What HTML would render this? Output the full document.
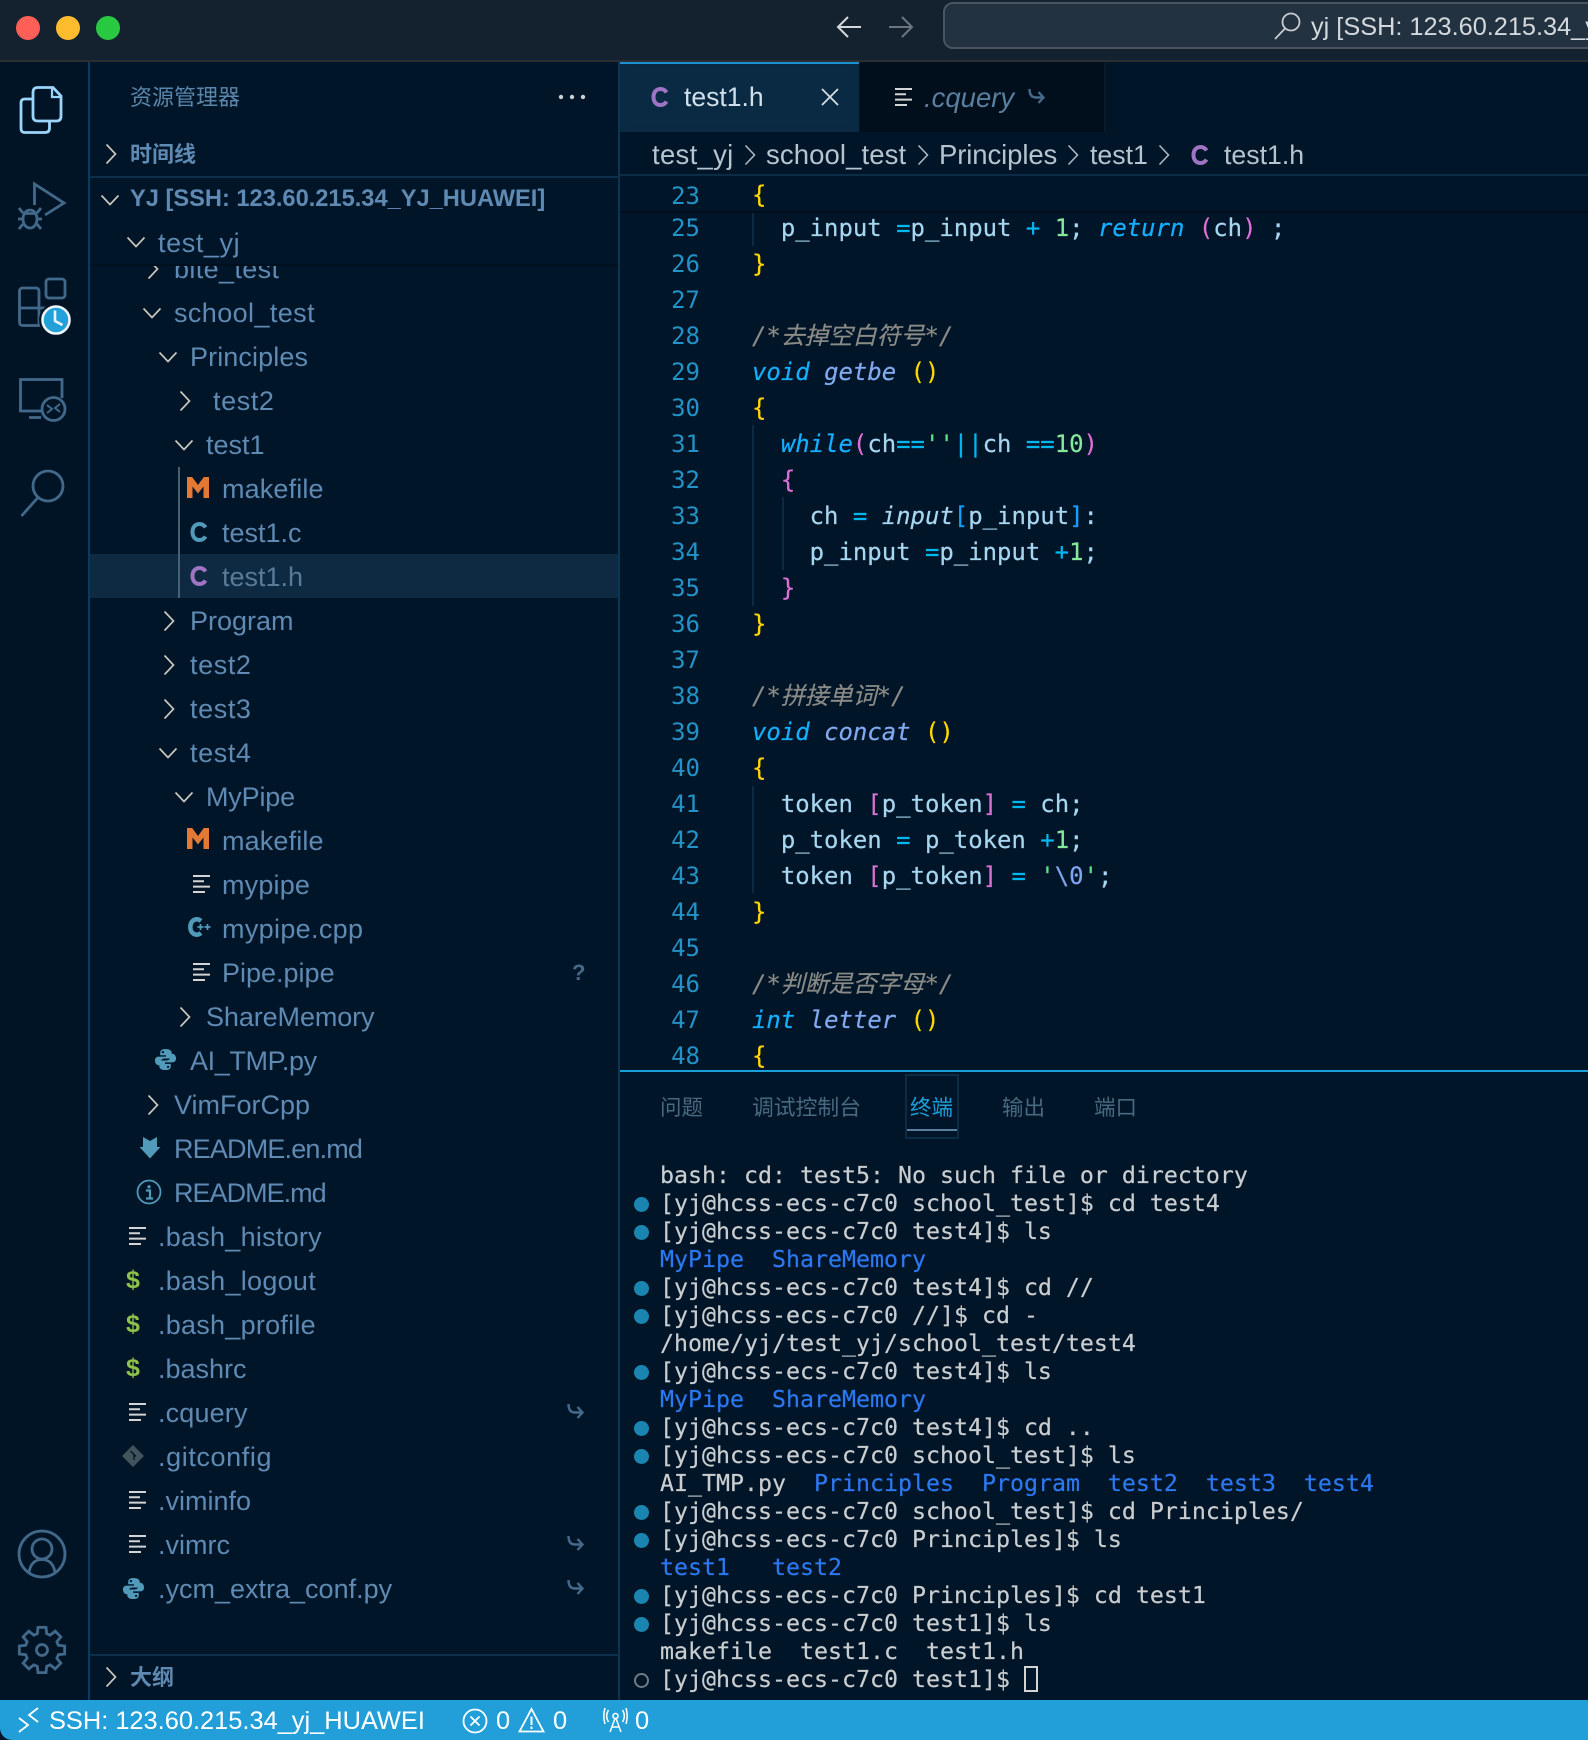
<!DOCTYPE html>
<html lang="zh">
<head>
<meta charset="utf-8">
<title>test1.h</title>
<style>
html,body{margin:0;padding:0;width:1588px;height:1740px;overflow:hidden;background:#001527}
body{position:relative;font-family:"Liberation Sans","Noto Sans CJK SC",sans-serif}
div,svg{position:absolute}
svg{overflow:visible}
#clip{left:0;top:0;width:1588px;height:1740px;overflow:hidden}
.r{height:44px;line-height:44px;font-size:27px;color:#5f8ab3;white-space:pre}
.cr{width:12px;height:22px}
.cd{width:20px;height:12px}
.fl{width:17px;height:18px}
.hk{width:18px;height:18px}
.dl{left:130px;width:24px;height:44px;line-height:44px;font-size:25px;font-weight:bold;color:#8dc149;text-align:center}
.ln{left:650px;width:50px;height:36px;margin-top:1px;text-align:right;font:24px/36px "DejaVu Sans Mono",monospace;color:#2393c7}
.c{left:752px;height:36px;margin-top:1px;white-space:pre;font:23.95px/36px "DejaVu Sans Mono","Noto Sans CJK SC",monospace;color:#a7d6f0;-webkit-text-stroke:.2px}
.y{color:#ffd700}.p{color:#da70d6}.b{color:#179fff}.o{color:#00b8f0}.n{color:#85e89d}
.k{color:#14b0ff;font-style:italic}.f{color:#82aaf0;font-style:italic}.g{color:#8a8a86;font-style:italic}
.q{color:#5fe08a}.e{color:#7fa5f0}.w{color:#a7d6f0}
.t{left:660px;height:28px;margin-top:1px;white-space:pre;font:23.26px/28px "DejaVu Sans Mono",monospace;color:#c9cdd0;-webkit-text-stroke:.2px}
.d{color:#2c78f0}
.dot{left:634px;width:15px;height:15px;margin-top:1px;border-radius:50%;background:#1a85b0}
.pt{height:40px;line-height:40px;margin-top:1px;font-size:21.5px;color:#48697f;white-space:pre}
.bc{top:135px;height:40px;line-height:40px;font-size:27.5px;color:#b5c4cf;white-space:pre}
.gd{width:2px;background:#0c2a42}
.st{top:1700px;height:40px;line-height:43px;font-size:25.4px;color:#fff;white-space:pre}
.ai{fill:none;stroke:#42698a;stroke-width:2.8}
</style>
</head>
<body>
<div id="clip">
<svg width="0" height="0" style="left:0;top:0">
<defs>
<symbol id="chr" viewBox="0 0 12 22"><path fill="none" stroke="#c9c7bd" stroke-width="1.7" d="M1.5 1.5L10.5 11L1.5 20.5"/></symbol>
<symbol id="chd" viewBox="0 0 20 12"><path fill="none" stroke="#c9c7bd" stroke-width="1.7" d="M1.5 1.5L10 10.5L18.5 1.5"/></symbol>
<symbol id="file" viewBox="0 0 17 18"><path fill="none" stroke="#d2d4d6" stroke-width="2" d="M0 1h17M0 6.3h11M0 11.6h17M0 17h12"/></symbol>
<symbol id="hook" viewBox="0 0 18 18"><path fill="none" stroke="#47698a" stroke-width="2.4" d="M2.5 1C2.5 6.5 4.5 9.5 9 9.5H16.5M11.5 4L16.5 9.5L11.5 15"/></symbol>
<symbol id="M" viewBox="0 0 22 21"><path fill="#e37933" d="M0 21V0h5.2L11 8l5.8-8H22v21h-5.5V9.500L11 16.500 5.500 9.500V21z"/></symbol>
<symbol id="cb" viewBox="0 0 17 20"><path fill="none" stroke="#519aba" stroke-width="4" d="M15.500 5.500C14 3 12 2 9.500 2C5 2 2.500 5.500 2.500 10C2.500 14.500 5 18 9.500 18C12 18 14 17 15.500 14.500"/></symbol>
<symbol id="cp" viewBox="0 0 17 20"><path fill="none" stroke="#a074c4" stroke-width="4" d="M15.500 5.500C14 3 12 2 9.500 2C5 2 2.500 5.500 2.500 10C2.500 14.500 5 18 9.500 18C12 18 14 17 15.500 14.500"/></symbol>
<symbol id="py" viewBox="0 0 24 24"><path fill="#519aba" d="M12 1C8 1 6.500 2.500 6.500 5v2.500H12.500V9H5C2.500 9 1 10.500 1 13s1.500 5 4 5h2v-3c0-2.500 1.500-4 4-4h5c1.500 0 2.500-1 2.500-2.500V5C18.500 2.500 16 1 12 1z"/><path fill="#519aba" d="M12 23c4 0 5.500-1.500 5.500-4v-2.500H11.500V15H19c2.500 0 4-1.500 4-4s-1.500-5-4-5h-2v3c0 2.500-1.500 4-4 4H8c-1.500 0-2.500 1-2.500 2.500V19C5.500 21.500 8 23 12 23z"/><circle cx="9.300" cy="4.300" r="1.200" fill="#001527"/><circle cx="14.700" cy="19.700" r="1.200" fill="#001527"/></symbol>
</defs>
</svg>

<!-- Title bar -->
<div style="left:0;top:0;width:1588px;height:60px;background:#14222f"></div>
<div style="left:0;top:60px;width:1588px;height:2px;background:#2b2e31"></div>
<div style="left:16px;top:16px;width:24px;height:24px;border-radius:50%;background:#ff5f57"></div>
<div style="left:56px;top:16px;width:24px;height:24px;border-radius:50%;background:#febc2e"></div>
<div style="left:96px;top:16px;width:24px;height:24px;border-radius:50%;background:#28c840"></div>
<svg style="left:836px;top:15px" width="26" height="24" viewBox="0 0 26 24"><path d="M12 2L2 12L12 22M2 12H25" fill="none" stroke="#d4d8dc" stroke-width="2"/></svg>
<svg style="left:888px;top:15px" width="26" height="24" viewBox="0 0 26 24"><path d="M14 2L24 12L14 22M24 12H1" fill="none" stroke="#6c7680" stroke-width="2"/></svg>
<div id="sb" style="left:943px;top:2px;width:645px;height:47px;overflow:hidden"><div style="left:0;top:0;width:700px;height:47px;box-sizing:border-box;border:2px solid #49545f;border-radius:10px;background:#233240"></div>
<svg style="left:330px;top:10px" width="28" height="28" viewBox="0 0 28 28"><circle cx="18" cy="10" r="8.500" fill="none" stroke="#c6ccd2" stroke-width="1.800"/><path d="M12 16.500L2 27" stroke="#c6ccd2" stroke-width="1.800"/></svg>
<div style="left:368px;top:5px;width:277px;height:40px;overflow:hidden;line-height:40px;font-size:25.300px;color:#d3d8dd;white-space:pre">yj [SSH: 123.60.215.34_yj_HUAWEI]</div></div>

<!-- Activity bar -->
<div style="left:0;top:62px;width:88px;height:1638px;background:#001426"></div>
<div style="left:88px;top:62px;width:2px;height:1638px;background:#0c3a5c"></div>
<div style="left:618px;top:62px;width:2px;height:1638px;background:#0c3553"></div>

<svg style="left:0;top:60px" width="88" height="480" viewBox="0 60 88 480">
<!-- files -->
<path d="M38 87.500H53L61 96V116C61 119.500 59.500 121 56.500 121H38C34.500 121 33 119.500 33 116V92.500C33 89 34.500 87.500 38 87.500z" fill="none" stroke="#9cd5fb" stroke-width="2.800"/>
<path d="M52 88V97H61" fill="none" stroke="#9cd5fb" stroke-width="2.200"/>
<path d="M33 99H25C22 99 21 100.500 21 103V128C21 131 22 132.500 25 132.500H45C48 132.500 49.500 131 49.500 128V121.500" fill="none" stroke="#9cd5fb" stroke-width="2.800"/>
<!-- debug -->
<path d="M34.500 205V184L64 203L45 215" class="ai"/>
<ellipse cx="30" cy="219" rx="7" ry="9" class="ai"/>
<path d="M23 213.500H37M23 213L19 208M37 213L41 208M18 219H23M37 219H42M23 224L19 229M37 224L41 229" class="ai" stroke-width="2.400"/>
<!-- extensions -->
<path d="M19.500 308H39M39 308V325.500H23C20.500 325.500 19.500 324.500 19.500 322V291.500C19.500 289 20.500 288 23 288H35.500C38 288 39 289 39 291.500V308" class="ai"/>
<rect x="46" y="279" width="19" height="19" rx="3" class="ai"/>
<path d="M39 308H46" class="ai"/>
<circle cx="56" cy="320" r="17" fill="#001426"/>
<circle cx="56" cy="320" r="13.500" fill="#22a0d8" stroke="#eef5fa" stroke-width="2.600"/>
<path d="M55 310.500V321L62.500 325" fill="none" stroke="#eef5fa" stroke-width="2.600"/>
<!-- remote -->
<path d="M41 411H20.500V379.500H62V398" class="ai"/>
<path d="M29 417.500H41" class="ai"/>
<circle cx="53.500" cy="409" r="11.500" class="ai"/>
<path d="M47 405L52 409L47 413M60 404L55 408L60 412" fill="none" stroke="#42698a" stroke-width="2"/>
<!-- search -->
<circle cx="48" cy="486" r="15" class="ai"/>
<path d="M37.500 498L21.500 516" class="ai"/>
</svg>

<svg style="left:0;top:1520px" width="88" height="170" viewBox="0 1520 88 170">
<circle cx="42" cy="1554" r="23" class="ai"/>
<circle cx="42" cy="1549" r="10" class="ai"/>
<path d="M29 1573C30 1564 35 1559.500 42 1559.500C49 1559.500 54 1564 55 1573" class="ai"/>
<g transform="translate(42 1650)">
<path class="ai" d="M4.690-16.340L4-22.650L-4-22.650L-4.690-16.340L-8.240-14.870L-13.190-18.840L-18.840-13.190L-14.870-8.240L-16.340-4.690L-22.650-4L-22.650 4L-16.340 4.690L-14.870 8.240L-18.840 13.190L-13.190 18.840L-8.240 14.870L-4.690 16.340L-4 22.650L4 22.650L4.690 16.340L8.240 14.870L13.190 18.840L18.840 13.190L14.870 8.240L16.340 4.690L22.650 4L22.650-4L16.340-4.690L14.870-8.240L18.840-13.190L13.190-18.840L8.240-14.870z"/>
<circle r="5.500" class="ai"/>
</g>
</svg>

<!-- Sidebar header -->
<div class="r" style="left:130px;top:76px;font-size:22px;color:#5a86ab">资源管理器</div>
<svg style="left:558px;top:94px" width="28" height="6"><circle cx="3" cy="3" r="2.200" fill="#c9d0d6"/><circle cx="14" cy="3" r="2.200" fill="#c9d0d6"/><circle cx="25" cy="3" r="2.200" fill="#c9d0d6"/></svg>
<svg class="cr" style="left:105px;top:143px"><use href="#chr"/></svg>
<div class="r" style="left:130px;top:133px;font-size:22px;font-weight:bold">时间线</div>
<div style="left:90px;top:176px;width:528px;height:2px;background:#0c2e48"></div>
<svg class="cd" style="left:100px;top:194px"><use href="#chd"/></svg>
<div class="r" style="left:130px;top:177px;font-size:23.650px;font-weight:bold">YJ [SSH: 123.60.215.34_YJ_HUAWEI]</div>

<!-- Selected row -->
<div style="left:90px;top:554px;width:528px;height:44px;background:#0d2a42"></div>
<div style="left:178px;top:467px;width:2px;height:131px;background:#4b5f70"></div>

<!-- Tree -->
<svg class="cr" style="left:147px;top:258px"><use href="#chr"/></svg>
<div class="r" style="left:174px;top:247px;letter-spacing:.37px">bite_test</div>

<!-- sticky header -->
<div style="left:90px;top:220px;width:528px;height:45px;background:#001527"></div>
<div style="left:90px;top:264px;width:528px;height:2px;background:#00101e"></div>
<svg class="cd" style="left:126px;top:236px"><use href="#chd"/></svg>
<div class="r" style="left:158px;top:221px;letter-spacing:.6px">test_yj</div>

<svg class="cd" style="left:142px;top:307px"><use href="#chd"/></svg>
<div class="r" style="left:174px;top:291px;letter-spacing:.4px">school_test</div>
<svg class="cd" style="left:158px;top:351px"><use href="#chd"/></svg>
<div class="r" style="left:190px;top:335px;letter-spacing:.1px">Principles</div>
<svg class="cr" style="left:179px;top:390px"><use href="#chr"/></svg>
<div class="r" style="left:213px;top:379px;letter-spacing:.6px">test2</div>
<svg class="cd" style="left:174px;top:439px"><use href="#chd"/></svg>
<div class="r" style="left:206px;top:423px">test1</div>
<svg style="left:187px;top:477px" width="22" height="21"><use href="#M"/></svg>
<div class="r" style="left:222px;top:467px;letter-spacing:.14px">makefile</div>
<svg style="left:190px;top:522px" width="17" height="20"><use href="#cb"/></svg>
<div class="r" style="left:222px;top:511px">test1.c</div>
<svg style="left:190px;top:566px" width="17" height="20"><use href="#cp"/></svg>
<div class="r" style="left:222px;top:555px;color:#5a7b98">test1.h</div>
<svg class="cr" style="left:163px;top:610px"><use href="#chr"/></svg>
<div class="r" style="left:190px;top:599px">Program</div>
<svg class="cr" style="left:163px;top:654px"><use href="#chr"/></svg>
<div class="r" style="left:190px;top:643px;letter-spacing:.6px">test2</div>
<svg class="cr" style="left:163px;top:698px"><use href="#chr"/></svg>
<div class="r" style="left:190px;top:687px;letter-spacing:.6px">test3</div>
<svg class="cd" style="left:158px;top:747px"><use href="#chd"/></svg>
<div class="r" style="left:190px;top:731px;letter-spacing:.6px">test4</div>
<svg class="cd" style="left:174px;top:791px"><use href="#chd"/></svg>
<div class="r" style="left:206px;top:775px;letter-spacing:-.18px">MyPipe</div>
<svg style="left:187px;top:828px" width="22" height="21"><use href="#M"/></svg>
<div class="r" style="left:222px;top:819px;letter-spacing:.14px">makefile</div>
<svg class="fl" style="left:193px;top:875px"><use href="#file"/></svg>
<div class="r" style="left:222px;top:863px;letter-spacing:.18px">mypipe</div>
<svg style="left:188px;top:917px" width="23" height="20" viewBox="0 0 23 20"><path fill="none" stroke="#519aba" stroke-width="4.500" d="M13 4C11.500 2.800 10.500 2.300 9 2.300C5 2.300 2.300 5.500 2.300 10C2.300 14.500 5 17.700 9 17.700C10.500 17.700 11.500 17.200 13 16"/><path d="M9.500 10H15.500M12.500 7V13M16.500 10H22.500M19.500 7V13" stroke="#519aba" stroke-width="1.700" fill="none"/></svg>
<div class="r" style="left:222px;top:907px;letter-spacing:.33px">mypipe.cpp</div>
<svg class="fl" style="left:193px;top:963px"><use href="#file"/></svg>
<div class="r" style="left:222px;top:951px">Pipe.pipe</div>
<div class="r" style="left:572px;top:951px;font-size:22px;font-weight:bold;color:#47698a">?</div>
<svg class="cr" style="left:179px;top:1006px"><use href="#chr"/></svg>
<div class="r" style="left:206px;top:995px;letter-spacing:-.1px">ShareMemory</div>
<svg style="left:154px;top:1048px" width="23" height="23"><use href="#py"/></svg>
<div class="r" style="left:190px;top:1039px;letter-spacing:-.37px">AI_TMP.py</div>
<svg class="cr" style="left:147px;top:1094px"><use href="#chr"/></svg>
<div class="r" style="left:174px;top:1083px">VimForCpp</div>
<svg style="left:139px;top:1137px" width="22" height="22" viewBox="0 0 22 22"><path fill="#519aba" d="M4 0L11 4L18 0V10H21.500L11 21.500L0.500 10H4z"/></svg>
<div class="r" style="left:174px;top:1127px;letter-spacing:-.83px">README.en.md</div>
<svg style="left:136px;top:1179px" width="26" height="26" viewBox="0 0 26 26"><circle cx="13" cy="13" r="11.500" fill="none" stroke="#519aba" stroke-width="1.800"/><circle cx="13" cy="7.800" r="1.700" fill="#519aba"/><path d="M10 11.500H14V19M10 19.500H17" fill="none" stroke="#519aba" stroke-width="2.200"/></svg>
<div class="r" style="left:174px;top:1171px;letter-spacing:-.98px">README.md</div>
<svg class="fl" style="left:129px;top:1227px"><use href="#file"/></svg>
<div class="r" style="left:158px;top:1215px;letter-spacing:.25px">.bash_history</div>
<div class="dl" style="left:121px;top:1258px">$</div>
<div class="r" style="left:158px;top:1259px;letter-spacing:.28px">.bash_logout</div>
<div class="dl" style="left:121px;top:1302px">$</div>
<div class="r" style="left:158px;top:1303px;letter-spacing:.25px">.bash_profile</div>
<div class="dl" style="left:121px;top:1346px">$</div>
<div class="r" style="left:158px;top:1347px">.bashrc</div>
<svg class="fl" style="left:129px;top:1403px"><use href="#file"/></svg>
<div class="r" style="left:158px;top:1391px;letter-spacing:.15px">.cquery</div>
<svg class="hk" style="left:566px;top:1403px"><use href="#hook"/></svg>
<svg style="left:122px;top:1445px" width="22" height="22" viewBox="0 0 22 22"><path fill="#41535b" d="M11 0L22 11L11 22L0 11z"/><path d="M8.500 6L14 11.500M12 9V15" stroke="#001527" stroke-width="1.300" fill="none"/></svg>
<div class="r" style="left:158px;top:1435px;letter-spacing:.6px">.gitconfig</div>
<svg class="fl" style="left:129px;top:1491px"><use href="#file"/></svg>
<div class="r" style="left:158px;top:1479px">.viminfo</div>
<svg class="fl" style="left:129px;top:1535px"><use href="#file"/></svg>
<div class="r" style="left:158px;top:1523px">.vimrc</div>
<svg class="hk" style="left:566px;top:1535px"><use href="#hook"/></svg>
<svg style="left:122px;top:1577px" width="23" height="23"><use href="#py"/></svg>
<div class="r" style="left:158px;top:1567px">.ycm_extra_conf.py</div>
<svg class="hk" style="left:566px;top:1579px"><use href="#hook"/></svg>

<div style="left:90px;top:1654px;width:528px;height:2px;background:#0c2e48"></div>
<svg class="cr" style="left:105px;top:1666px"><use href="#chr"/></svg>
<div class="r" style="left:130px;top:1656px;font-size:22px;font-weight:bold">大纲</div>

<!-- Tabs -->
<div style="left:620px;top:62px;width:239px;height:70px;background:#0a2a44"></div>
<div style="left:620px;top:62px;width:239px;height:2px;background:#1c93d0"></div>
<div style="left:628px;top:70px;width:222px;height:53px;box-sizing:border-box;border:1px solid #0c2b46"></div>
<svg style="left:651px;top:87px" width="17" height="20"><use href="#cp"/></svg>
<div style="left:684px;top:77px;height:40px;line-height:40px;font-size:26.500px;color:#cfe0ea;white-space:pre">test1.h</div>
<svg style="left:821px;top:88px" width="18" height="18" viewBox="0 0 18 18"><path d="M1 1L17 17M17 1L1 17" stroke="#d6dde2" stroke-width="1.800"/></svg>
<div style="left:860px;top:62px;width:244px;height:70px;background:#010e1b"></div>
<div style="left:1104px;top:62px;width:2px;height:70px;background:#0a1a28"></div>
<svg class="fl" style="left:895px;top:88px"><use href="#file"/></svg>
<div style="left:924px;top:78px;height:40px;line-height:40px;font-size:27.500px;font-style:italic;color:#5a7f9f;white-space:pre">.cquery</div>
<svg class="hk" style="left:1027px;top:88px"><use href="#hook"/></svg>

<!-- Breadcrumbs -->
<div class="bc" style="left:652px;letter-spacing:.3px">test_yj</div>
<svg class="cr" style="left:744px;top:144px"><path d="M1.500 1.500L10.500 11L1.500 20.500" fill="none" stroke="#a9b8c3" stroke-width="1.600"/></svg>
<div class="bc" style="left:766px;letter-spacing:.1px">school_test</div>
<svg class="cr" style="left:917px;top:144px"><path d="M1.500 1.500L10.500 11L1.500 20.500" fill="none" stroke="#a9b8c3" stroke-width="1.600"/></svg>
<div class="bc" style="left:939px;letter-spacing:-.1px">Principles</div>
<svg class="cr" style="left:1067px;top:144px"><path d="M1.500 1.500L10.500 11L1.500 20.500" fill="none" stroke="#a9b8c3" stroke-width="1.600"/></svg>
<div class="bc" style="left:1090px;font-size:26.700px">test1</div>
<svg class="cr" style="left:1158px;top:144px"><path d="M1.500 1.500L10.500 11L1.500 20.500" fill="none" stroke="#a9b8c3" stroke-width="1.600"/></svg>
<svg style="left:1191px;top:145px" width="17" height="20"><use href="#cp"/></svg>
<div class="bc" style="left:1224px;font-size:26.700px">test1.h</div>
<div style="left:620px;top:174px;width:968px;height:2px;background:#0c2b44"></div>

<!-- Editor -->
<div class="gd" style="left:752px;top:213px;height:33px"></div>
<div class="gd" style="left:752px;top:425px;height:181px"></div>
<div class="gd" style="left:782px;top:497px;height:73px"></div>
<div class="gd" style="left:752px;top:786px;height:107px"></div>

<div class="ln" style="top:177px">23</div><div class="c" style="top:176px"><span class="y">{</span></div>
<div style="left:620px;top:211px;width:968px;height:2px;background:#000e1b"></div>
<div class="ln" style="top:209px">25</div><div class="c" style="top:209px">  p_input <span class="o">=</span>p_input <span class="o">+</span> <span class="n">1</span>; <span class="k">return</span> <span class="p">(</span>ch<span class="p">)</span> ;</div>
<div class="ln" style="top:245px">26</div><div class="c" style="top:245px"><span class="y">}</span></div>
<div class="ln" style="top:281px">27</div>
<div class="ln" style="top:317px">28</div><div class="c g" style="top:317px">/*去掉空白符号*/</div>
<div class="ln" style="top:353px">29</div><div class="c" style="top:353px"><span class="k">void</span> <span class="f">getbe</span> <span class="y">()</span></div>
<div class="ln" style="top:389px">30</div><div class="c" style="top:389px"><span class="y">{</span></div>
<div class="ln" style="top:425px">31</div><div class="c" style="top:425px">  <span class="k">while</span><span class="p">(</span>ch<span class="o">==</span><span class="q">''</span><span class="o">||</span>ch <span class="o">==</span><span class="n">10</span><span class="p">)</span></div>
<div class="ln" style="top:461px">32</div><div class="c" style="top:461px">  <span class="p">{</span></div>
<div class="ln" style="top:497px">33</div><div class="c" style="top:497px">    ch <span class="o">=</span> <i>input</i><span class="b">[</span>p_input<span class="b">]</span>:</div>
<div class="ln" style="top:533px">34</div><div class="c" style="top:533px">    p_input <span class="o">=</span>p_input <span class="o">+</span><span class="n">1</span>;</div>
<div class="ln" style="top:569px">35</div><div class="c" style="top:569px">  <span class="p">}</span></div>
<div class="ln" style="top:605px">36</div><div class="c" style="top:605px"><span class="y">}</span></div>
<div class="ln" style="top:641px">37</div>
<div class="ln" style="top:677px">38</div><div class="c g" style="top:677px">/*拼接单词*/</div>
<div class="ln" style="top:713px">39</div><div class="c" style="top:713px"><span class="k">void</span> <span class="f">concat</span> <span class="y">()</span></div>
<div class="ln" style="top:749px">40</div><div class="c" style="top:749px"><span class="y">{</span></div>
<div class="ln" style="top:785px">41</div><div class="c" style="top:785px">  token <span class="p">[</span>p_token<span class="p">]</span> <span class="o">=</span> ch;</div>
<div class="ln" style="top:821px">42</div><div class="c" style="top:821px">  p_token <span class="o">=</span> p_token <span class="o">+</span><span class="n">1</span>;</div>
<div class="ln" style="top:857px">43</div><div class="c" style="top:857px">  token <span class="p">[</span>p_token<span class="p">]</span> <span class="o">=</span> <span class="q">'</span><span class="e">\0</span><span class="q">'</span>;</div>
<div class="ln" style="top:893px">44</div><div class="c" style="top:893px"><span class="y">}</span></div>
<div class="ln" style="top:929px">45</div>
<div class="ln" style="top:965px">46</div><div class="c g" style="top:965px">/*判断是否字母*/</div>
<div class="ln" style="top:1001px">47</div><div class="c" style="top:1001px"><span class="k">int</span> <span class="f">letter</span> <span class="y">()</span></div>
<div class="ln" style="top:1037px">48</div><div class="c" style="top:1037px"><span class="y">{</span></div>

<!-- Panel -->
<div style="left:620px;top:1071px;width:968px;height:629px;background:#001527"></div>
<div style="left:620px;top:1070px;width:968px;height:2px;background:#1a9fd8"></div>
<div class="pt" style="left:660px;top:1087px">问题</div>
<div class="pt" style="left:752px;top:1087px;font-size:21.800px">调试控制台</div>
<div style="left:905px;top:1074px;width:54px;height:65px;box-sizing:border-box;border:2px solid #0c2b44"></div>
<div class="pt" style="left:910px;top:1087px;color:#1c9fd8">终端</div>
<div style="left:907px;top:1129px;width:50px;height:2px;background:#5a7f9e"></div>
<div class="pt" style="left:1002px;top:1087px">输出</div>
<div class="pt" style="left:1094px;top:1087px">端口</div>

<!-- Terminal -->
<div class="t" style="top:1161px">bash: cd: test5: No such file or directory</div>
<div class="dot" style="top:1196px"></div><div class="t" style="top:1189px">[yj@hcss-ecs-c7c0 school_test]$ cd test4</div>
<div class="dot" style="top:1224px"></div><div class="t" style="top:1217px">[yj@hcss-ecs-c7c0 test4]$ ls</div>
<div class="t d" style="top:1245px">MyPipe  ShareMemory</div>
<div class="dot" style="top:1280px"></div><div class="t" style="top:1273px">[yj@hcss-ecs-c7c0 test4]$ cd //</div>
<div class="dot" style="top:1308px"></div><div class="t" style="top:1301px">[yj@hcss-ecs-c7c0 //]$ cd -</div>
<div class="t" style="top:1329px">/home/yj/test_yj/school_test/test4</div>
<div class="dot" style="top:1364px"></div><div class="t" style="top:1357px">[yj@hcss-ecs-c7c0 test4]$ ls</div>
<div class="t d" style="top:1385px">MyPipe  ShareMemory</div>
<div class="dot" style="top:1420px"></div><div class="t" style="top:1413px">[yj@hcss-ecs-c7c0 test4]$ cd ..</div>
<div class="dot" style="top:1448px"></div><div class="t" style="top:1441px">[yj@hcss-ecs-c7c0 school_test]$ ls</div>
<div class="t" style="top:1469px">AI_TMP.py  <span class="d">Principles  Program  test2  test3  test4</span></div>
<div class="dot" style="top:1504px"></div><div class="t" style="top:1497px">[yj@hcss-ecs-c7c0 school_test]$ cd Principles/</div>
<div class="dot" style="top:1532px"></div><div class="t" style="top:1525px">[yj@hcss-ecs-c7c0 Principles]$ ls</div>
<div class="t d" style="top:1553px">test1   test2</div>
<div class="dot" style="top:1588px"></div><div class="t" style="top:1581px">[yj@hcss-ecs-c7c0 Principles]$ cd test1</div>
<div class="dot" style="top:1616px"></div><div class="t" style="top:1609px">[yj@hcss-ecs-c7c0 test1]$ ls</div>
<div class="t" style="top:1637px">makefile  test1.c  test1.h</div>
<div style="left:634px;top:1673px;width:15px;height:15px;box-sizing:border-box;border-radius:50%;border:2px solid #6f7c87"></div>
<div class="t" style="top:1665px">[yj@hcss-ecs-c7c0 test1]$ </div>
<div style="left:1024px;top:1666px;width:14px;height:26px;box-sizing:border-box;border:2px solid #d2d4d6"></div>

<!-- Status bar -->
<div style="left:0;top:1700px;width:1588px;height:40px;background:#229fd8;border-bottom-left-radius:12px"></div>
<svg style="left:18px;top:1707px" width="22" height="26" viewBox="0 0 22 26"><path d="M1 11L10 18L1 25M20 1L11 8L20 15" fill="none" stroke="#fff" stroke-width="1.800"/></svg>
<div class="st" style="left:49px">SSH: 123.60.215.34_yj_HUAWEI</div>
<svg style="left:462px;top:1708px" width="26" height="26" viewBox="0 0 26 26"><circle cx="13" cy="13" r="11.500" fill="none" stroke="#fff" stroke-width="1.800"/><path d="M8.500 8.500L17.500 17.500M17.500 8.500L8.500 17.500" stroke="#fff" stroke-width="1.800"/></svg>
<div class="st" style="left:496px">0</div>
<svg style="left:518px;top:1707px" width="27" height="26" viewBox="0 0 27 26"><path d="M13.500 2L25.500 24.500H1.500z" fill="none" stroke="#fff" stroke-width="1.800"/><path d="M13.500 9.500V18M13.500 19.500V22" stroke="#fff" stroke-width="2"/></svg>
<div class="st" style="left:553px">0</div>
<svg style="left:603px;top:1707px" width="25" height="26" viewBox="0 0 25 26"><circle cx="12.500" cy="9" r="2.500" fill="none" stroke="#fff" stroke-width="1.600"/><path d="M12 11.500L7 25M13 11.500L18 25M9 20H16M5.500 3C3 7 3 11 5.500 15M19.500 3C22 7 22 11 19.500 15M2 1C.5 6 .5 12 2 17M23 1C24.500 6 24.500 12 23 17" fill="none" stroke="#fff" stroke-width="1.500"/></svg>
<div class="st" style="left:635px">0</div>
</div>
</body>
</html>
